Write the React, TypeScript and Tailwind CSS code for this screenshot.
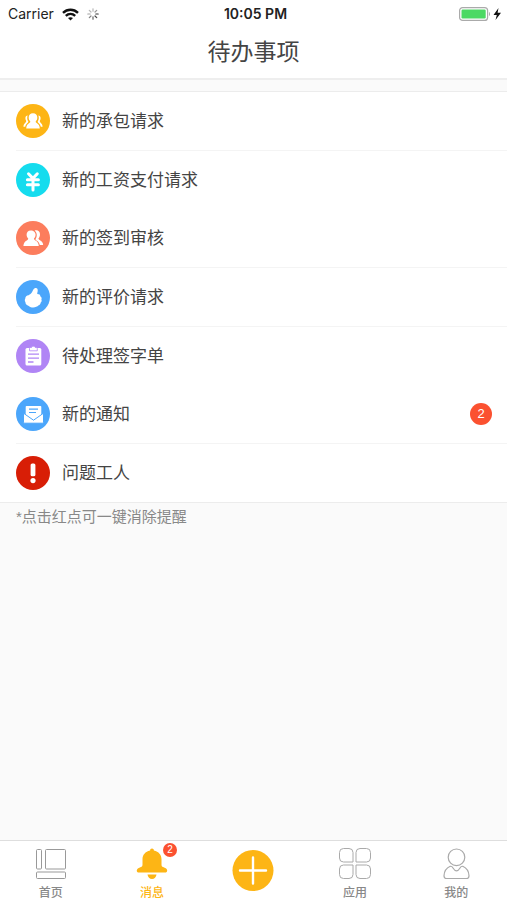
import React from 'react';

interface TodoItem {
  label: string;
  color: string;
  icon: React.ReactNode;
  count?: number;
  divider?: boolean;
}

const TeamIcon = () => (
  <svg viewBox="0 0 34 34" className="h-full w-full" fill="#fff">
    <path d="M17 9.200c-2.800 0-4.300 1.800-4.300 4.200 0 1.600.6 2.900 1.500 3.800.2.700 0 1.200-.9 1.800-1.900 1.200-2.900 2.500-3.100 5.500h13.600c-.2-3-1.200-4.300-3.100-5.500-.9-.6-1.100-1.100-.9-1.800.9-.9 1.500-2.200 1.500-3.800 0-2.400-1.500-4.200-4.300-4.200z" />
    <path id="side" d="M11.700 11.600c-1.400 0-2.300 1.100-2.300 2.700 0 1.100.3 1.900.8 2.500 0 1-.4 1.600-1.100 2.300-.9.800-1.600 1.800-1.700 3.700h1.800c.4-1.500 1-2.600 2-3.500.7-.6 1-1.100 1.200-1.600-.8-1.100-1.300-2.500-1.200-4.100 0-.7.200-1.400.5-2z" />
    <path d="M22.300 11.600c1.400 0 2.300 1.100 2.300 2.700 0 1.100-.3 1.900-.8 2.500 0 1 .4 1.600 1.100 2.300.9.800 1.600 1.800 1.700 3.700h-1.800c-.4-1.500-1-2.600-2-3.500-.7-.6-1-1.100-1.200-1.600.8-1.100 1.300-2.500 1.200-4.100 0-.7-.2-1.400-.5-2z" />
  </svg>
);

const YuanIcon = () => (
  <svg viewBox="0 0 34 34" className="h-full w-full" fill="none" stroke="#fff" strokeWidth="3" strokeLinecap="round" strokeLinejoin="round">
    <path d="M12.500 10.800l4.400 4.600 4.400-4.600M11.400 16.800h11M11.400 21.800h11M17 16v11" />
  </svg>
);

const PeopleIcon = () => (
  <svg viewBox="0 0 34 34" className="h-full w-full" fill="#fff">
    <path d="M14.800 9.400c-2.800 0-4.300 1.900-4.200 4.400.1 1.700.7 2.900 1.600 3.800.1.900-.4 1.300-1.400 1.800-1.900 1-3.200 2.300-3.400 5.600h15.400c-.2-3.300-1.500-4.600-3.400-5.600-1-.5-1.500-.9-1.400-1.800.9-.9 1.500-2.100 1.600-3.800.1-2.500-2-4.400-4.800-4.400z" />
    <path d="M18.700 9.500c3.200-.8 5.500 1.100 5.300 4.200-.1 1.600-.7 2.800-1.500 3.600.1 1 .7 1.600 1.800 2.200 1.600.9 2.700 2.300 2.900 4.600h-3.400c-.5-2.100-1.500-3.500-3.300-4.500-.7-.4-1-.9-1-1.400 1.900-2.800 1.700-6.500-.8-8.700z" />
  </svg>
);

const ThumbIcon = () => (
  <svg viewBox="0 0 34 34" className="h-full w-full" fill="#fff">
    <path d="M18.700 8.300c2-.9 3.300.5 3 2.700-.2 1.300-.6 2.200-.4 3.100 2 0 3 .8 3 2.200 1.300.8 1.700 2.100 1.100 3.200.6 1.300.2 2.500-.8 3.200-.1 1.300-.8 2.100-1.900 2.600-1.500 1.300-3.300 2.200-5.400 2.200-1.800 0-3.300-.6-4.500-1.600-2.200-.5-3.300-1.900-3.400-3.900-.8-1.300-.7-2.600-.1-3.600 0-1.900 1.300-3.100 3.300-3.200 1.500-.7 2.500-1.600 3.200-2.600.8-1.300 1.400-3.500 2.900-4.300z" />
  </svg>
);

const ClipboardIcon = () => (
  <svg viewBox="0 0 34 34" className="h-full w-full" fill="none">
    <rect x="9.500" y="9" width="15.800" height="17.500" rx="1.500" fill="#fff" />
    <path d="M13.500 11.800V9.500c0-.6.400-1 1-1h1c0-.8.700-1.200 1.900-1.200s1.900.4 1.900 1.200h1c.6 0 1 .4 1 1v2.300z" fill="#fff" stroke="#b085f5" strokeWidth=".8" />
    <path d="M12 15.200h11M12 19.200h11M12 23h5.500" stroke="#b085f5" strokeWidth="1.300" />
  </svg>
);

const MailIcon = () => (
  <svg viewBox="0 0 34 34" className="h-full w-full" fill="none">
    <path d="M9.700 19V9.800c0-.5.3-.8.800-.8h14c.5 0 .8.300.8.800V19l-7.800 4.500z" fill="#fff" />
    <path d="M7.500 16.200l10 7 10-7v9c0 .6-.4 1-1 1h-18c-.6 0-1-.4-1-1z" fill="#fff" stroke="#4ba6fb" strokeWidth="1" />
    <path d="M13 12.200h9M13 15.500h7" stroke="#4ba6fb" strokeWidth="1.200" />
  </svg>
);

const AlertIcon = () => (
  <svg viewBox="0 0 34 34" className="h-full w-full" fill="#fff">
    <rect x="14.600" y="7.500" width="4.800" height="12.800" rx="1.600" />
    <circle cx="17" cy="24.600" r="2.600" />
  </svg>
);

const items: TodoItem[] = [
  { label: '新的承包请求', color: 'bg-[#fdb515]', icon: <TeamIcon />, divider: true },
  { label: '新的工资支付请求', color: 'bg-[#15dcee]', icon: <YuanIcon /> },
  { label: '新的签到审核', color: 'bg-[#fc7d5d]', icon: <PeopleIcon />, divider: true },
  { label: '新的评价请求', color: 'bg-[#4ba6fb]', icon: <ThumbIcon />, divider: true },
  { label: '待处理签字单', color: 'bg-[#b085f5]', icon: <ClipboardIcon /> },
  { label: '新的通知', color: 'bg-[#4ba6fb]', icon: <MailIcon />, count: 2, divider: true },
  { label: '问题工人', color: 'bg-[#d81e06]', icon: <AlertIcon /> },
];

const StatusBar = () => (
  <div className="grid h-[26px] grid-cols-3 items-center pt-0.5 pr-1 pl-2 font-[Inter,sans-serif] text-sm text-[#222]">
    <div className="flex items-center gap-2">
      <span>Carrier</span>
      <svg viewBox="0 0 17 13" className="h-[13px] w-[17px]" fill="none" stroke="#111" strokeWidth="2.400">
        <path d="M1 4.800c4.300-4.100 10.700-4.100 15 0M3.800 7.900c2.700-2.500 6.700-2.500 9.400 0" />
        <path d="M8.500 12.600L6 10.100c1.500-1.300 3.500-1.300 5 0z" fill="#111" stroke="none" />
      </svg>
      <svg viewBox="0 0 12 12" className="h-3 w-3" stroke="#333" strokeWidth="1.200" strokeLinecap="round">
        <path d="M6 .8v2.400" opacity=".35" />
        <path d="M9.700 2.300L8 4" opacity=".5" />
        <path d="M11.200 6H8.800" />
        <path d="M9.700 9.700L8 8" opacity=".9" />
        <path d="M6 11.200V8.800" opacity=".75" />
        <path d="M2.300 9.700L4 8" opacity=".6" />
        <path d="M.8 6h2.400" opacity=".45" />
        <path d="M2.300 2.300L4 4" opacity=".35" />
      </svg>
    </div>
    <span className="justify-self-center whitespace-nowrap font-semibold">10:05 PM</span>
    <svg viewBox="0 0 44 14" className="h-3.5 w-11 justify-self-end" fill="none">
      <rect x=".6" y=".6" width="28" height="12.800" rx="3" stroke="#aaa" strokeWidth="1.200" />
      <rect x="2.500" y="2.500" width="24.200" height="9" rx="1.200" fill="#4cd964" />
      <path d="M30 5c1.300.4 1.300 3.600 0 4z" fill="#aaa" />
      <path d="M39.500 1L34.500 8h3.300l-1.300 5 5.500-7.200h-3.400z" fill="#111" />
    </svg>
  </div>
);

const TodoRow: React.FC<{ item: TodoItem }> = ({ item }) => (
  <li className="pl-4">
    <a href="#" className={`box-content flex h-[58px] items-center gap-3 pr-[15px] ${item.divider ? 'border-b border-[#f4f4f4]' : ''}`}>
      <span className={`h-[34px] w-[34px] shrink-0 rounded-full ${item.color}`}>{item.icon}</span>
      <span className="pt-0.5 text-[17px] text-[#444]">{item.label}</span>
      {item.count && (
        <span className="ml-auto flex h-[22px] w-[22px] items-center justify-center rounded-full bg-[#fb5130] text-[13px] text-white">
          {item.count}
        </span>
      )}
    </a>
  </li>
);

const tabClass = 'flex flex-col items-center gap-1 pt-1.5 text-xs leading-4 font-medium';

const TabBar = () => (
  <nav className="grid h-[60px] grid-cols-5 border-t border-[#dedede] bg-white">
    <a href="#" className={`${tabClass} text-[#888]`}>
      <svg viewBox="0 0 34 34" className="h-[34px] w-[34px]" fill="none" stroke="#999">
        <rect x="2.500" y="2.500" width="5" height="19.500" rx="1" />
        <rect x="11.500" y="2.500" width="20" height="19.500" rx="1" />
        <rect x="2.500" y="25" width="29" height="6.500" rx="1" />
      </svg>
      首页
    </a>
    <a href="#" className={`${tabClass} text-[#fdb515]`}>
      <span className="relative">
        <svg viewBox="0 0 34 34" className="h-[34px] w-[34px]" fill="#fdb515">
          <path d="M17 1.500c-1.200 0-1.900.9-1.900 2.100C10.300 4.600 7.500 8 7.500 12.500v5.300c0 1-.5 1.900-1.600 2.300l-2.100.8c-2.900 1.100-2.500 4.600 0 4.600h26.400c2.500 0 2.900-3.500 0-4.600l-2.100-.8c-1.100-.4-1.600-1.300-1.600-2.300v-5.300c0-4.500-2.800-7.900-7.600-8.900 0-1.200-.7-2.100-1.900-2.100z" />
          <path d="M12.500 27.500h9c-.4 2.600-2 4.500-4.500 4.500s-4.100-1.900-4.500-4.500z" />
        </svg>
        <span className="absolute -top-1 -right-2 flex h-3.5 w-3.5 items-center justify-center rounded-full bg-[#fb5130] text-[10px] leading-none text-white">
          2
        </span>
      </span>
      消息
    </a>
    <button type="button" aria-label="添加" className="flex items-center justify-center">
      <svg viewBox="0 0 42 42" className="h-[42px] w-[42px]">
        <circle cx="21" cy="20.500" r="20.500" fill="#fdb515" />
        <path d="M21 7.500v26M8 20.500h26" stroke="#fff" strokeWidth="2.400" strokeLinecap="round" />
      </svg>
    </button>
    <a href="#" className={`${tabClass} text-[#888]`}>
      <svg viewBox="0 0 34 34" className="h-[34px] w-[34px]" fill="none" stroke="#aaa">
        <path d="M5.500 1.500h5.500a4 4 0 0 1 4 4V15H5.500a4 4 0 0 1-4-4V5.500a4 4 0 0 1 4-4z" />
        <path d="M22 1.500h6.500a4 4 0 0 1 4 4V11a4 4 0 0 1-4 4H18V5.500a4 4 0 0 1 4-4z" />
        <path d="M5.500 18H15v9.500a4 4 0 0 1-4 4H5.500a4 4 0 0 1-4-4V22a4 4 0 0 1 4-4z" />
        <path d="M18 18h10.500a4 4 0 0 1 4 4v5.500a4 4 0 0 1-4 4H22a4 4 0 0 1-4-4z" />
      </svg>
      应用
    </a>
    <a href="#" className={`${tabClass} text-[#888]`}>
      <svg viewBox="0 0 34 34" className="h-[34px] w-[34px]" fill="none" stroke="#aaa" strokeWidth="1.200" strokeLinejoin="round">
        <circle cx="17.500" cy="10.300" r="8.300" />
        <path d="M11.200 19.300c1.300-.3 2 .3 2.800 1.700.9 1.500 2 2.800 3.500 2.800s2.600-1.300 3.500-2.800c.8-1.400 1.500-2 2.800-1.700 3.300 1.500 6 4.900 6.200 9.400 0 1.800-.9 2.800-2.500 2.800h-20c-1.600 0-2.500-1-2.500-2.800.2-4.500 2.900-7.900 6.200-9.400z" />
      </svg>
      我的
    </a>
  </nav>
);

const App: React.FC = () => {
  return (
    <div className="flex min-h-screen flex-col bg-[#fafafa] font-['Liberation_Sans','Noto_Sans_CJK_SC',sans-serif]">
      <header className="border-b-2 border-[#eee] bg-white">
        <StatusBar />
        <h1 className="flex h-[52px] items-center justify-center text-[23px] text-[#444]">待办事项</h1>
      </header>
      <main className="flex-grow pt-[11px]">
        <ul className="border-y border-[#ececec] bg-white">
          {items.map((item) => (
            <TodoRow key={item.label} item={item} />
          ))}
        </ul>
        <p className="px-4 pt-1 text-[15px] leading-5 text-[#888]">*点击红点可一键消除提醒</p>
      </main>
      <TabBar />
    </div>
  );
};

export default App;
